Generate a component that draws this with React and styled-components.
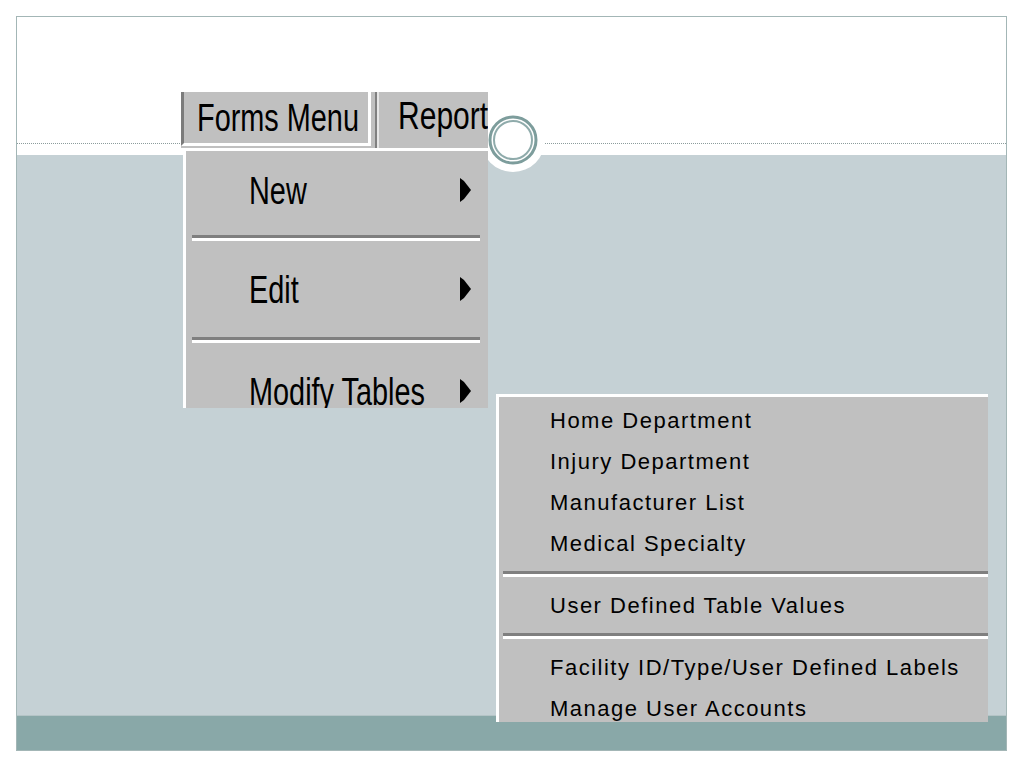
import styled, { createGlobalStyle } from "styled-components";

// data
// -----

const mainItems = [
  { label: "New", height: 84, lift: 6 },
  { label: "Edit", height: 96, lift: 0 },
  { label: "Modify Tables", height: 96, lift: 0 },
];

const tableGroups = [
  ["Home Department", "Injury Department", "Manufacturer List", "Medical Specialty"],
  ["User Defined Table Values"],
  ["Facility ID/Type/User Defined Labels", "Manage User Accounts"],
];

// styles
// -------

const GlobalStyle = createGlobalStyle`
  html, body {
    margin: 0;
    padding: 0;
    background: #ffffff;
  }
  body {
    font-family: "Liberation Sans", Arial, sans-serif;
  }
`;

const Slide = styled.div`
  position: relative;
  box-sizing: border-box;
  margin: 16px 0 0 16px;
  width: 991px;
  height: 735px;
  border: 1px solid #a3b6b6;
  display: flex;
  flex-direction: column;
  overflow: hidden;
`;

const Header = styled.div`
  height: 138px;
  background: #ffffff;
  display: flex;
  flex-direction: column;
  justify-content: flex-end;
`;

const DottedRule = styled.div`
  border-top: 1px dotted #8c9c9c;
  margin-bottom: 11px;
`;

const Body = styled.div`
  flex: 1;
  background: #c5d1d5;
`;

const Footer = styled.div`
  height: 34px;
  background: #89a8a8;
  border-top: 1px solid #b4c4c6;
`;

const Badge = styled.svg`
  position: absolute;
  left: 464px;
  top: 91px;
`;

const MenuPicture = styled.div`
  position: absolute;
  left: ${(p) => p.$left}px;
  top: ${(p) => p.$top}px;
  width: ${(p) => p.$width}px;
  height: ${(p) => p.$height}px;
  overflow: hidden;
  display: flex;
  flex-direction: column;
`;

const MenuBar = styled.div`
  display: flex;
  align-items: flex-start;
  gap: 4px;
  height: 56px;
  background: #c0c0c0;
  flex: none;
`;

const Tab = styled.div`
  box-sizing: border-box;
  flex: none;
  height: ${(p) => (p.$pressed ? 54 : 56)}px;
  width: ${(p) => (p.$pressed ? 190 : 140)}px;
  display: flex;
  align-items: center;
  padding-left: ${(p) => (p.$pressed ? 13 : 21)}px;
  border-left: ${(p) => (p.$pressed ? "3px solid #7b7b7b" : "2px solid #808080")};
  border-bottom: ${(p) => (p.$pressed ? "3px solid #ffffff" : "none")};
  border-right: ${(p) => (p.$pressed ? "3px solid #ffffff" : "none")};
  box-shadow: ${(p) => (p.$pressed ? "none" : "inset 2px 0 0 #e6e6e6")};
  padding-bottom: ${(p) => (p.$pressed ? 0 : 10)}px;
`;

const BigLabel = styled.span`
  display: inline-block;
  font-family: "Liberation Sans", Arial, sans-serif;
  font-size: 39px;
  line-height: 1;
  color: #000000;
  white-space: nowrap;
  transform: scaleX(${(p) => p.$squeeze || 0.74});
  transform-origin: left center;
`;

const Dropdown = styled.div`
  flex: 1;
  margin-left: 2px;
  background: #c0c0c0;
  border-top: 3px solid #ffffff;
  border-left: 3px solid #ffffff;
  display: flex;
  flex-direction: column;
`;

const BigItem = styled.div`
  box-sizing: border-box;
  flex: none;
  height: ${(p) => p.$height}px;
  display: grid;
  grid-template-columns: minmax(0, 1fr) 11px;
  align-items: center;
  padding: 0 17px ${(p) => p.$lift}px 63px;
`;

const Arrow = styled.svg`
  display: block;
`;

const Separator = styled.div`
  flex: none;
  height: 3px;
  background: #7f7f7f;
  border-bottom: 3px solid #ffffff;
  margin: ${(p) => p.$margin};
`;

const TablesMenu = styled.div`
  flex: 1;
  background: #c0c0c0;
  border-top: 3px solid #ffffff;
  border-left: 3px solid #ffffff;
  padding-top: 3px;
  display: flex;
  flex-direction: column;
`;

const TableItem = styled.div`
  flex: none;
  height: 41px;
  display: flex;
  align-items: center;
  padding-left: 51px;
  font-family: "Liberation Sans", Arial, sans-serif;
  font-size: 22px;
  letter-spacing: 1.5px;
  color: #000000;
  white-space: nowrap;
`;

// components
// -----------

const RightArrow = () => (
  <Arrow width="11" height="24" viewBox="0 0 11 24">
    <polygon points="0,0 4,3 11,12 4,21 0,24" fill="#000" />
  </Arrow>
);

const App = () => {
  return (
    <>
      <GlobalStyle />
      <Slide>
        <Header>
          <DottedRule />
        </Header>
        <Body />
        <Footer />

        <Badge width="64" height="64" viewBox="0 0 64 64">
          <circle cx="32" cy="32" r="32" fill="#ffffff" />
          <circle cx="32" cy="32" r="23" fill="none" stroke="#7d9d9c" strokeWidth="3" />
          <circle cx="32" cy="32" r="19" fill="#ffffff" stroke="#8fabab" strokeWidth="2" />
        </Badge>

        <MenuPicture $left={164} $top={75} $width={307} $height={316}>
          <MenuBar>
            <Tab $pressed>
              <BigLabel>Forms Menu</BigLabel>
            </Tab>
            <Tab>
              <BigLabel $squeeze={0.77}>Report</BigLabel>
            </Tab>
          </MenuBar>
          <Dropdown>
            {mainItems.map((item, index) => (
              <div key={item.label}>
                {index > 0 && <Separator $margin="0 8px 0 6px" />}
                <BigItem $height={item.height} $lift={item.lift}>
                  <BigLabel>{item.label}</BigLabel>
                  <RightArrow />
                </BigItem>
              </div>
            ))}
          </Dropdown>
        </MenuPicture>

        <MenuPicture $left={479} $top={377} $width={492} $height={328}>
          <TablesMenu>
            {tableGroups.map((group, index) => (
              <div key={index}>
                {index > 0 && <Separator $margin="7px 0 8px 4px" />}
                {group.map((label) => (
                  <TableItem key={label}>{label}</TableItem>
                ))}
              </div>
            ))}
          </TablesMenu>
        </MenuPicture>
      </Slide>
    </>
  );
};

export default App;
